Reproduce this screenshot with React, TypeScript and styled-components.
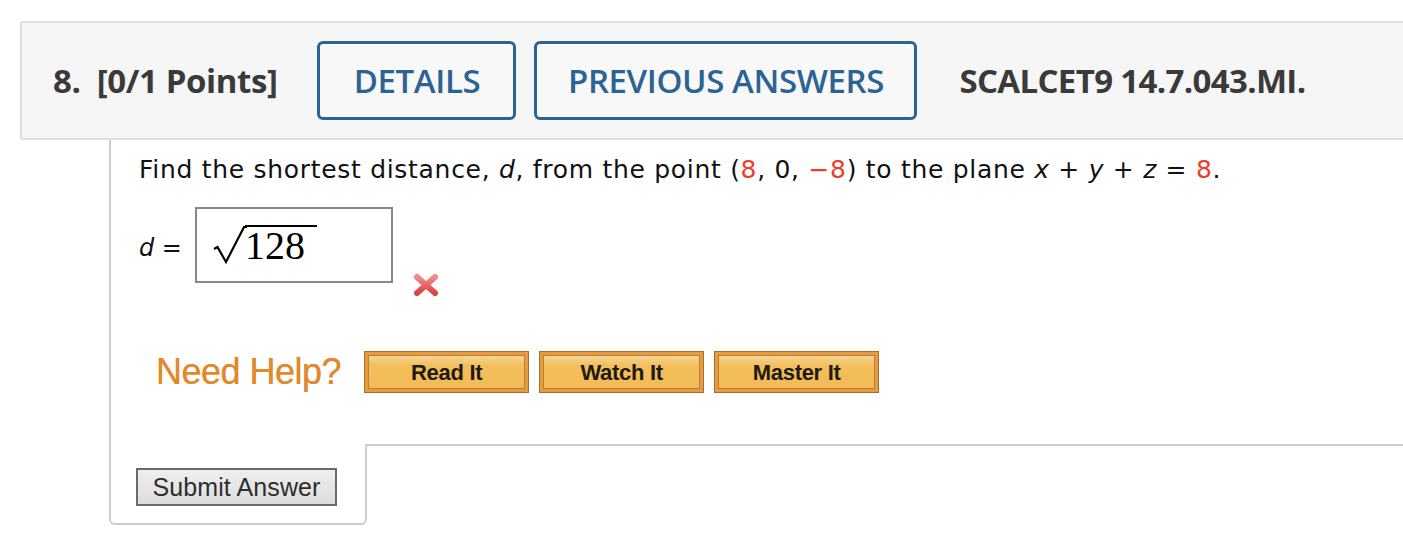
import React from "react"
import styled, { createGlobalStyle } from "styled-components"

const GlobalStyle = createGlobalStyle`
  html, body {
    margin: 0;
    padding: 0;
    background: #ffffff;
  }
  body {
    overflow: hidden;
  }
`

const Page = styled.div`
  width: 1403px;
  height: 537px;
  padding: 21px 0 0 20px;
  box-sizing: border-box;
  overflow: hidden;
`

const Header = styled.div`
  display: flex;
  align-items: center;
  height: 119px;
  box-sizing: border-box;
  margin-right: -20px;
  padding-left: 31px;
  background: #f6f6f6;
  border: 2px solid #dedede;
  border-radius: 3px;
  font-family: "Open Sans", "Liberation Sans", sans-serif;
`

const Points = styled.div`
  font-size: 33px;
  font-weight: 700;
  color: #3a3a3a;
  white-space: pre;
  letter-spacing: -0.4px;
  margin-right: 40px;
`

const OutlineButton = styled.button<{ $width: number }>`
  width: ${p => p.$width}px;
  height: 79px;
  margin-right: ${p => (p.$width > 300 ? 42 : 18)}px;
  background: #f8f8f8;
  border: 3px solid #2c6395;
  border-radius: 6px;
  color: #2c6395;
  font-family: "Open Sans", "Liberation Sans", sans-serif;
  font-size: 33px;
  font-weight: 600;
  letter-spacing: -0.4px;
  padding: 0;
  cursor: pointer;
`

const Code = styled.div`
  font-size: 33px;
  font-weight: 700;
  color: #3a3a3a;
  letter-spacing: -0.65px;
`

const Body = styled.div`
  display: flex;
  flex-direction: column;
  margin-left: 89px;
`

const Upper = styled.div`
  border-left: 2px solid #cccccc;
  padding: 14px 0 0 28px;
  height: 304px;
  box-sizing: border-box;
`

const Question = styled.div`
  font-family: "DejaVu Sans", Verdana, sans-serif;
  font-size: 25px;
  line-height: 31px;
  color: #111111;
  letter-spacing: 0.7px;
  white-space: nowrap;
`

const Red = styled.span`
  color: #e8402c;
`

const Var = styled.i`
  font-style: oblique;
`

const AnswerRow = styled.div`
  display: flex;
  align-items: flex-start;
  margin-top: 22px;
`

const Label = styled.div`
  font-family: "DejaVu Sans", Verdana, sans-serif;
  font-size: 24px;
  color: #111111;
  height: 76px;
  padding-top: 6px;
  box-sizing: border-box;
  display: flex;
  align-items: center;
  width: 56px;
  white-space: pre;
`

const AnswerBox = styled.div`
  width: 198px;
  height: 76px;
  box-sizing: border-box;
  border: 2px solid #888888;
  display: flex;
  align-items: flex-start;
  padding: 16px 0 0 16px;
`

const Radicand = styled.span`
  font-family: "Liberation Serif", "Times New Roman", serif;
  font-size: 40px;
  line-height: 38px;
  color: #000000;
  border-top: 2px solid #000000;
  padding-right: 12px;
  margin-left: -2px;
`

const WrongMark = styled.svg`
  margin: 66px 0 0 20px;
`

const HelpRow = styled.div`
  display: flex;
  align-items: center;
  margin-top: 54px;
  padding-left: 17px;
  gap: 10px;
`

const HelpLabel = styled.div`
  font-family: "Liberation Sans", Arial, sans-serif;
  font-size: 36px;
  color: #e3892c;
  margin-right: 13px;
  letter-spacing: -0.5px;
  text-shadow: 0 0 0.6px #e3892c;
`

const OrangeButton = styled.button`
  width: 165px;
  height: 42px;
  box-sizing: border-box;
  border: 1px solid #a86e2c;
  background: #e89a3f;
  padding: 3px;
  cursor: pointer;
`

const OrangeInner = styled.span`
  display: flex;
  align-items: center;
  justify-content: center;
  height: 100%;
  box-sizing: border-box;
  border: 1px solid #bb7e3a;
  background: linear-gradient(#f6d596 0%, #f3be5b 30%, #f2bb57 100%);
  font-family: "Liberation Sans", Arial, sans-serif;
  font-size: 22px;
  font-weight: 700;
  color: #1c1a12;
  letter-spacing: -0.3px;
  padding-top: 2px;
`

const BottomRow = styled.div`
  display: flex;
  height: 81px;
`

const SubmitTab = styled.div`
  width: 258px;
  box-sizing: border-box;
  border: 2px solid #cccccc;
  border-top: none;
  border-radius: 0 0 6px 6px;
  padding: 24px 0 0 25px;
`

const Rest = styled.div`
  flex: 1;
  border-top: 2px solid #cccccc;
  margin-left: -2px;
  border-top-left-radius: 3px;
`

const SubmitButton = styled.button`
  width: 201px;
  height: 38px;
  box-sizing: border-box;
  border: 2px solid #6a6a6a;
  background: linear-gradient(#efefef, #dcdcdc);
  font-family: "Liberation Sans", Arial, sans-serif;
  font-size: 25px;
  color: #2e2e2e;
  letter-spacing: 0.1px;
  padding: 0;
  cursor: pointer;
`

const Radical = () => (
  <svg width="34" height="40" viewBox="0 0 34 40">
    <path
      d="M1 24 L4.5 22 L13 37 L31 2 L34 2"
      fill="none"
      stroke="#000"
      strokeWidth="2.2"
      strokeLinejoin="miter"
    />
  </svg>
)

export default function App() {
  return (
    <Page>
      <GlobalStyle />
      <Header>
        <Points>{"8.  [0/1 Points]"}</Points>
        <OutlineButton $width={199}>DETAILS</OutlineButton>
        <OutlineButton $width={383}>PREVIOUS ANSWERS</OutlineButton>
        <Code>SCALCET9 14.7.043.MI.</Code>
      </Header>
      <Body>
        <Upper>
          <Question>
            Find the shortest distance, <Var>d</Var>, from the point (<Red>8</Red>, 0,{" "}
            <Red>−8</Red>) to the plane <Var>x</Var> + <Var>y</Var> + <Var>z</Var> ={" "}
            <Red>8</Red>.
          </Question>
          <AnswerRow>
            <Label>
              <Var>d</Var>
              {" = "}
            </Label>
            <AnswerBox>
              <Radical />
              <Radicand>128</Radicand>
            </AnswerBox>
            <WrongMark width="26" height="24" viewBox="0 0 26 24">
              <defs>
                <linearGradient id="xg" x1="0" y1="0" x2="0" y2="1">
                  <stop offset="0" stopColor="#f28a8a" />
                  <stop offset="1" stopColor="#d94444" />
                </linearGradient>
              </defs>
              <path
                d="M4 4 L22 20 M22 4 L4 20"
                stroke="url(#xg)"
                strokeWidth="6"
                strokeLinecap="round"
              />
            </WrongMark>
          </AnswerRow>
          <HelpRow>
            <HelpLabel>Need Help?</HelpLabel>
            <OrangeButton>
              <OrangeInner>Read It</OrangeInner>
            </OrangeButton>
            <OrangeButton>
              <OrangeInner>Watch It</OrangeInner>
            </OrangeButton>
            <OrangeButton>
              <OrangeInner>Master It</OrangeInner>
            </OrangeButton>
          </HelpRow>
        </Upper>
        <BottomRow>
          <SubmitTab>
            <SubmitButton>Submit Answer</SubmitButton>
          </SubmitTab>
          <Rest />
        </BottomRow>
      </Body>
    </Page>
  )
}
